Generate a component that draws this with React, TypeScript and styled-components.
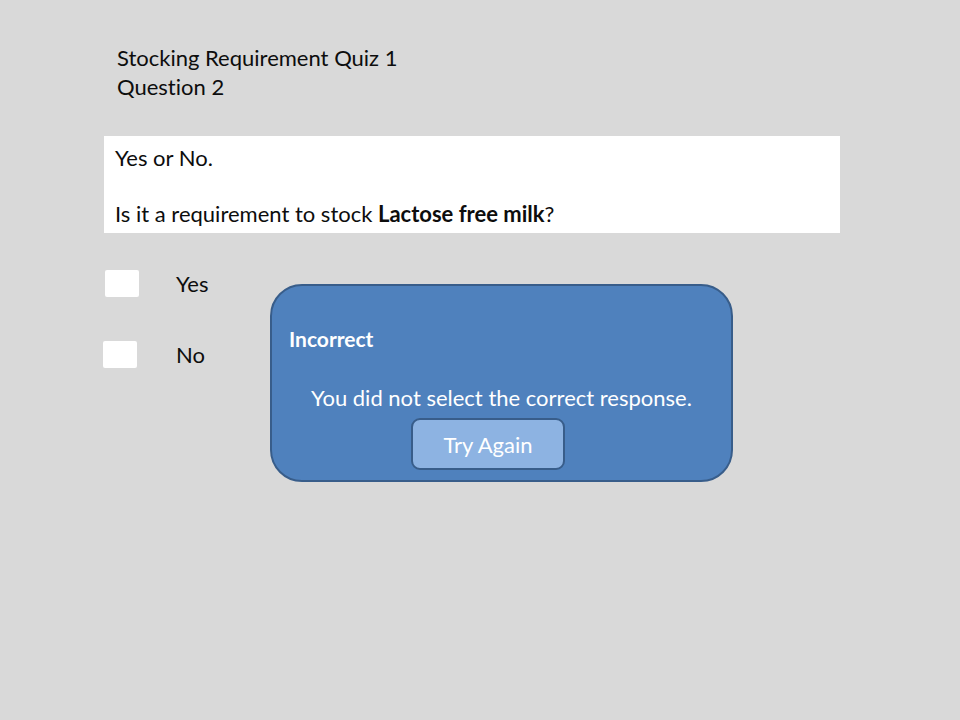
import styled, { createGlobalStyle } from "styled-components";

const GlobalStyle = createGlobalStyle`
  html, body {
    margin: 0;
    padding: 0;
    background: #d9d9d9;
  }
  body {
    font-family: Lato, "Open Sans", sans-serif;
    font-variant-ligatures: none;
    color: #0d0d0d;
  }
`;

const Slide = styled.div`
  position: relative;
  width: 960px;
  height: 720px;
  background: #d9d9d9;
  box-sizing: border-box;
  padding: 43px 0 0 0;
`;

const Header = styled.div`
  margin-left: 117px;
  font-size: 22px;
  line-height: 29px;
`;

const QuestionBox = styled.div`
  margin: 35px 0 0 104px;
  width: 736px;
  height: 97px;
  background: #fff;
  box-sizing: border-box;
  padding: 8px 11px;
  font-size: 22px;
  line-height: 28px;
  p {
    margin: 0;
  }
  p + p {
    margin-top: 28px;
  }
`;

const Answers = styled.div`
  margin-top: 37px;
  display: flex;
  flex-direction: column;
  gap: 44px;
`;

const AnswerRow = styled.label`
  display: flex;
  align-items: center;
  font-size: 22px;
`;

const Checkbox = styled.span<{ $offset: number }>`
  display: block;
  width: 34px;
  height: 27px;
  background: #fff;
  border-radius: 2px;
  margin-left: ${(p) => p.$offset}px;
  margin-right: ${(p) => 176 - p.$offset - 34}px;
`;

const Dialog = styled.div`
  position: absolute;
  left: 270px;
  top: 284px;
  width: 463px;
  height: 198px;
  box-sizing: border-box;
  background: #4f81bd;
  border: 2.5px solid #385d8a;
  border-radius: 32px;
  color: #fff;
  display: flex;
  flex-direction: column;
  padding: 40px 0 0 17px;
`;

const DialogTitle = styled.div`
  font-weight: bold;
  font-size: 21px;
  line-height: 26px;
`;

const DialogMessage = styled.div`
  margin-top: 32px;
  padding-right: 17px;
  text-align: center;
  font-size: 22px;
  line-height: 28px;
`;

const TryAgain = styled.button`
  margin: 6px 0 0 122px;
  width: 154px;
  height: 52px;
  box-sizing: border-box;
  background: #8db3e2;
  border: 2.5px solid #385d8a;
  border-radius: 9px;
  color: #fff;
  font-family: inherit;
  font-size: 22px;
  cursor: pointer;
`;

export default function App() {
  return (
    <>
      <GlobalStyle />
      <Slide>
        <Header>
          <div>Stocking Requirement Quiz 1</div>
          <div>Question 2</div>
        </Header>
        <QuestionBox>
          <p>Yes or No.</p>
          <p>
            Is it a requirement to stock <strong>Lactose free milk</strong>?
          </p>
        </QuestionBox>
        <Answers>
          <AnswerRow>
            <Checkbox $offset={105} />
            Yes
          </AnswerRow>
          <AnswerRow>
            <Checkbox $offset={103} />
            No
          </AnswerRow>
        </Answers>
        <Dialog>
          <DialogTitle>Incorrect</DialogTitle>
          <DialogMessage>You did not select the correct response.</DialogMessage>
          <TryAgain>Try Again</TryAgain>
        </Dialog>
      </Slide>
    </>
  );
}
